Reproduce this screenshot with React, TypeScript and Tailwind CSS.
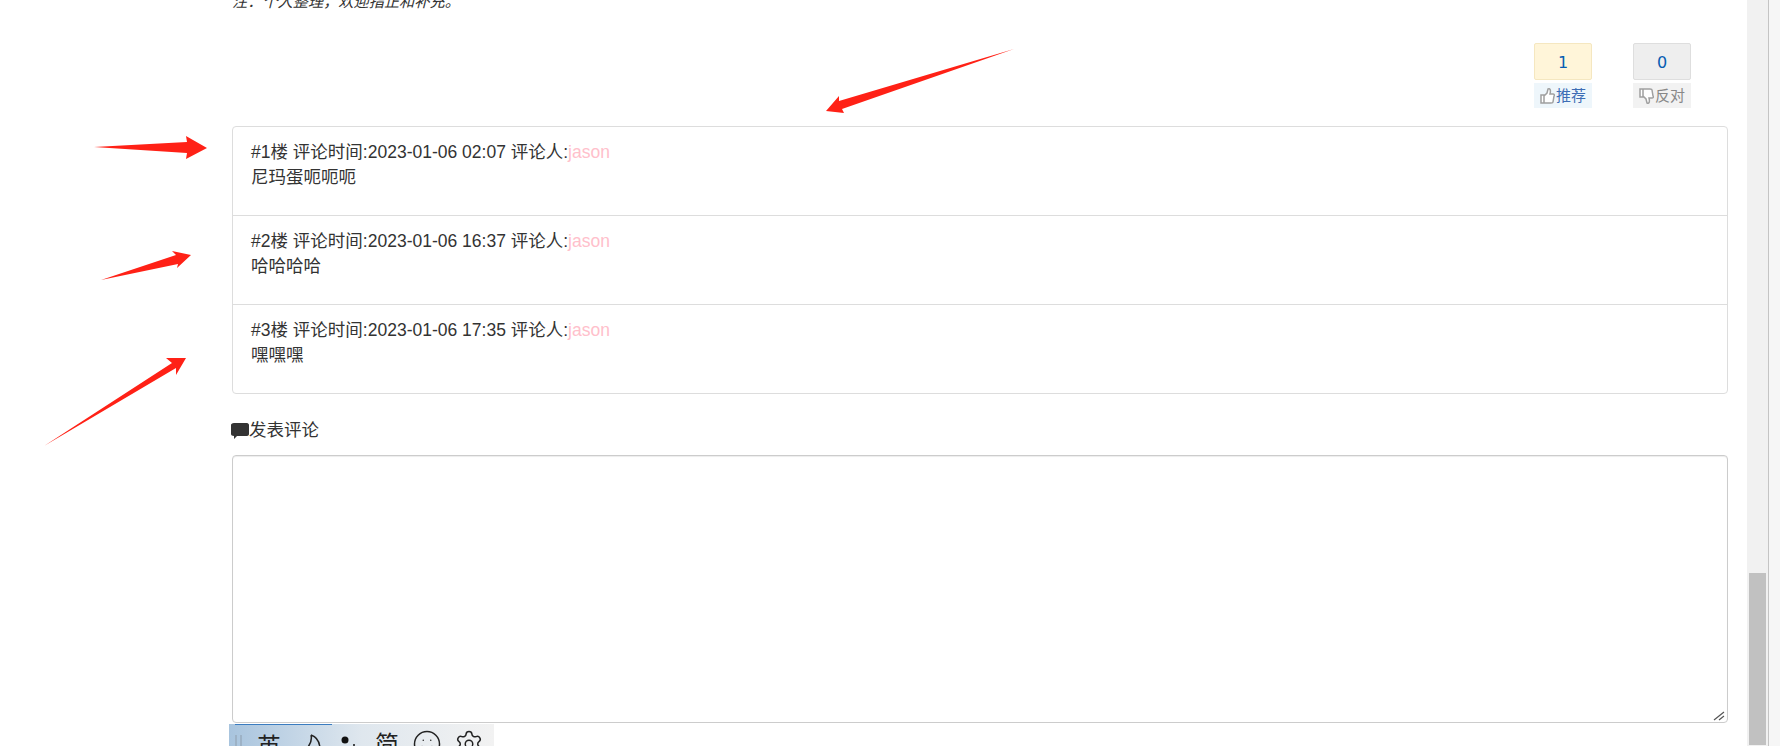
import { Settings, Smile } from "lucide-react";

const comments = [
  { floor: 1, time: "2023-01-06 02:07", text: "尼玛蛋呃呃呃" },
  { floor: 2, time: "2023-01-06 16:37", text: "哈哈哈哈" },
  { floor: 3, time: "2023-01-06 17:35", text: "嘿嘿嘿" },
];

const arrows = [
  "94,147 187,142 186,136 207,148 186,159 187,153",
  "101,280 176,255 172,251 191,255 177,268 178,264",
  "44,446 172,363 166,358 186,358 176,375 176,368",
  "1014,49 839,101 839,96 826,111 844,113 842,109",
];

const Thumb = ({ down }: { down?: boolean }) => (
  <svg
    width="15"
    height="18"
    viewBox="0 0 15 18"
    className={down ? "rotate-180 -scale-x-100" : ""}
  >
    <path
      d="M1 8h3v8H1zM4 9l3-3 1-4c2-1 3 1 2 5h3c1 0 2 1 1 2l-1 6c0 1-1 1-2 1H4z"
      fill="#fff"
      stroke="#a0a0a0"
      strokeWidth="1.5"
    />
  </svg>
);

export default function App() {
  return (
    <div className="flex h-[746px] w-full overflow-hidden bg-white font-['Liberation_Sans','Noto_Sans_CJK_SC',sans-serif] text-[17.5px] leading-[25px] text-[#333]">
      <main className="relative flex-1 pl-[232px] pr-[19px]">
        <p className="mt-[-8px] h-[25px] text-[15.2px] italic leading-[20px]">
          注：个人整理，欢迎指正和补充。
        </p>
        <div className="mt-[26px] flex justify-end gap-[41px] pr-[37px]">
          <div className="w-[58px]">
            <div className="flex h-[37px] items-center justify-center rounded-[2px] border border-[#f5e7c0] bg-[#fff5d9] pt-[2px] font-['DejaVu_Sans',sans-serif] text-[16px] text-[#075db3]">
              1
            </div>
            <div className="mt-[3px] flex h-[25px] items-center justify-center gap-[1px] bg-[#eef6fb] text-[15px] text-[#3d6db5]">
              <Thumb />
              推荐
            </div>
          </div>
          <div className="w-[58px]">
            <div className="flex h-[37px] items-center justify-center rounded-[2px] border border-[#dedede] bg-[#eeeeee] pt-[2px] font-['DejaVu_Sans',sans-serif] text-[16px] text-[#075db3]">
              0
            </div>
            <div className="mt-[3px] flex h-[25px] items-center justify-center gap-[1px] bg-[#f2f2f2] text-[15px] text-[#888]">
              <Thumb down />
              反对
            </div>
          </div>
        </div>
        <ul className="mt-[18px] rounded-[4px] border border-[#dddddd]">
          {comments.map((c) => (
            <li
              key={c.floor}
              className="h-[89px] border-b border-[#dddddd] px-[18px] pt-[13px] last:h-[88px] last:border-b-0"
            >
              <div>
                #{c.floor}楼 评论时间:{c.time} 评论人:
                <span className="text-[#ffc0cb]">jason</span>
              </div>
              <div>{c.text}</div>
            </li>
          ))}
        </ul>
        <div className="mt-[24px] flex h-[25px] items-center">
          <svg width="18" height="18" viewBox="0 0 18 18" className="-ml-[1px] shrink-0">
            <path
              d="M3 1h13c1 0 2 1 2 2v9c0 1-1 2-2 2H6l-3 3v-3c-2 0-3-1-3-2V3c0-1 1-2 3-2z"
              fill="#333"
            />
          </svg>
          发表评论
        </div>
        <textarea className="mt-[12px] block h-[268px] w-full resize-none rounded-[4px] border border-[#cccccc] shadow-[inset_0_1px_1px_rgba(0,0,0,0.075)] outline-none" />
        <svg width="14" height="12" viewBox="0 0 14 12" className="absolute left-[1712px] top-[710px]" stroke="#555" strokeWidth="1.2">
          <path d="M2 10 12 2M7 10l5-4" />
        </svg>

        {/* input method bar sitting on top of the page */}
        <div className="absolute left-[229px] top-[724px] flex h-[30px] w-[265px] items-start overflow-hidden bg-gradient-to-r from-[#a8c4de] via-[#dfe7ee] to-[#f2f2f2] pl-[6px] text-[24px] leading-[32px] text-[#222]">
          <div className="absolute left-[6px] top-0 h-[1px] w-[97px] bg-[#3a7cc0]" />
          <div className="mt-[11px] h-[14px] w-[7px] shrink-0 border-x-2 border-[#9db2c6]" />
          <span className="ml-[15px] mt-[5px] shrink-0 font-['Noto_Sans_CJK_SC',sans-serif]">英</span>
          <svg width="14" height="24" viewBox="0 0 14 24" className="ml-[26px] mt-[10px] shrink-0" fill="none" stroke="#222" strokeWidth="1.5">
            <path d="M4 1c6 2 9 7 9 15M4 1c1 4 0 8-3 12" />
          </svg>
          <svg width="16" height="24" viewBox="0 0 16 24" className="ml-[19px] mt-[10px] shrink-0" fill="#111">
            <circle cx="5" cy="6" r="3.5" />
            <circle cx="14" cy="11" r="1" />
          </svg>
          <span className="ml-[19px] mt-[3px] shrink-0 font-['Noto_Sans_CJK_SC',sans-serif]">简</span>
          <Smile className="ml-[13px] mt-[5px] size-[30px] shrink-0" strokeWidth={1.2} />
          <Settings className="ml-[12px] mt-[5px] size-[30px] shrink-0" strokeWidth={1.2} />
        </div>

        <svg
          className="pointer-events-none absolute left-0 top-0"
          width="1100"
          height="460"
          viewBox="0 0 1100 460"
        >
          {arrows.map((p) => (
            <polygon key={p} points={p} fill="#ff2116" />
          ))}
        </svg>
      </main>
      <div className="flex w-[33px] shrink-0">
        <div className="flex h-full w-[21px] flex-col justify-end bg-[#f1f1f1] px-[2px] pb-[1px]">
          <div className="h-[172px] bg-[#c1c1c1]" />
        </div>
        <div className="h-full w-[12px] border-l border-[#c4c4c4] bg-[#f6f6f6]" />
      </div>
    </div>
  );
}
